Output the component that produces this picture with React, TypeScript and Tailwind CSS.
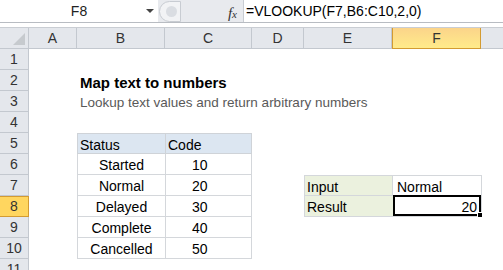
import React from 'react';

const cols = [
  { key: 'A', w: 48 },
  { key: 'B', w: 88 },
  { key: 'C', w: 87 },
  { key: 'D', w: 52 },
  { key: 'E', w: 88 },
  { key: 'F', w: 89 },
  { key: '', w: 40 },
];

const statusRows = [
  ['Started', '10'],
  ['Normal', '20'],
  ['Delayed', '30'],
  ['Complete', '40'],
  ['Cancelled', '50'],
];

const font = { fontFamily: '"Liberation Sans", Arial, sans-serif' };

function FormulaBar() {
  return (
    <div className="flex h-[23px] border-b border-[#b8bcc2] bg-white">
      <div className="relative flex w-[158px] items-center justify-center">
        <span className="text-[14px] text-[#222]">F8</span>
        <span className="absolute right-[4px] top-[9px] h-0 w-0 border-x-[4px] border-t-[4px] border-x-transparent border-t-[#444]" />
      </div>
      <div className="relative flex w-[85px] items-center bg-[#e8eaee]">
        <div className="absolute left-[1px] top-[1px] h-[21px] w-[22px] rounded-l-full border border-[#c8ccd2] bg-[#f2f3f5]">
          <div className="ml-[6px] mt-[4px] h-[11px] w-[11px] rounded-full bg-[#dadde2]" />
        </div>
        <span className="absolute right-[6px] top-[2px] text-[15px] italic text-[#333]" style={{ fontFamily: '"Liberation Serif", serif' }}>
          f<span className="text-[11px]">x</span>
        </span>
      </div>
      <div className="flex flex-1 items-center border-l border-[#c8ccd2] pl-[2px] text-[14px] text-black">
        =VLOOKUP(F7,B6:C10,2,0)
      </div>
    </div>
  );
}

function ColHeaders() {
  return (
    <div className="flex h-[21px] bg-[#e4e7ec]">
      <div className="relative w-[29px] shrink-0 border-b border-r border-[#c3c8cf]">
        <span className="absolute bottom-[3px] right-[3px] h-0 w-0 border-b-[12px] border-l-[12px] border-b-[#c6cace] border-l-transparent" />
      </div>
      {cols.map((c, i) =>
        c.key === 'F' ? (
          <div
            key={i}
            style={{ width: c.w }}
            className="flex shrink-0 items-center justify-center border border-t-0 border-[#d39b32] bg-gradient-to-b from-[#fbd48a] to-[#ffeb8a] text-[14px] text-[#333]"
          >
            {c.key}
          </div>
        ) : (
          <div
            key={i}
            style={{ width: c.w }}
            className="flex shrink-0 items-center justify-center border-b border-r border-[#c3c8cf] text-[14px] text-[#333]"
          >
            {c.key}
          </div>
        ),
      )}
    </div>
  );
}

function RowHeader({ n }: { n: number }) {
  const active = n === 8;
  return (
    <div
      className={
        active
          ? 'flex h-[21px] w-[29px] shrink-0 items-center justify-center border border-l-0 border-[#d39b32] bg-[#ffd65f] text-[14px] text-[#333]'
          : 'flex h-[21px] w-[29px] shrink-0 items-center justify-center border-b border-r border-[#c3c8cf] bg-[#e4e7ec] text-[14px] text-[#333]'
      }
    >
      {n}
    </div>
  );
}

function Row({ n, children }: { n: number; children?: React.ReactNode }) {
  return (
    <div className="flex h-[21px]">
      <RowHeader n={n} />
      <div className="flex flex-1 items-stretch">{children}</div>
    </div>
  );
}

export default function App() {
  return (
    <div className="h-[270px] w-[503px] overflow-hidden bg-white" style={font}>
      <FormulaBar />
      <div className="h-[5px] border-b border-[#c9cdd3] bg-white" />
      <ColHeaders />

      <Row n={1} />
      <Row n={2}>
        <div className="pl-[51px] pt-[2px] text-[15px] font-bold text-black">Map text to numbers</div>
      </Row>
      <Row n={3}>
        <div className="pl-[51px] pt-[2px] text-[13.5px] text-[#595959]">
          Lookup text values and return arbitrary numbers
        </div>
      </Row>
      <Row n={4} />
      <Row n={5}>
        <div className="w-[48px]" />
        <div className="flex w-[175px] border border-[#cfd3d8] bg-[#dce6f1] text-[14px] text-black">
          <div className="w-[88px] border-r border-[#cfd3d8] pl-[2px] pt-[1px]">Status</div>
          <div className="flex-1 pl-[2px] pt-[1px]">Code</div>
        </div>
      </Row>
      {statusRows.map(([s, c], i) => {
        const n = 6 + i;
        return (
          <Row key={n} n={n}>
            <div className="w-[48px]" />
            <div className="flex w-[175px] border-x border-b border-[#d4d7db] text-[14px] text-black">
              <div className="w-[88px] border-r border-[#d4d7db] pt-[1px] text-center">{s}</div>
              <div className="flex-1 pl-[26px] pt-[1px]">{c}</div>
            </div>
            {n === 7 && (
              <>
                <div className="w-[52px]" />
                <div className="flex w-[178px] border border-[#d4d7db] text-[14px] text-black">
                  <div className="w-[88px] border-r border-[#d4d7db] bg-[#ebf1de] pl-[2px] pt-[1px]">Input</div>
                  <div className="flex-1 pl-[4px] pt-[1px]">Normal</div>
                </div>
              </>
            )}
            {n === 8 && (
              <>
                <div className="w-[52px]" />
                <div className="flex w-[178px] border-x border-b border-[#d4d7db] text-[14px] text-black">
                  <div className="w-[88px] bg-[#ebf1de] pl-[2px] pt-[1px]">Result</div>
                  <div className="relative -mt-[1px] flex-1 border-[2px] border-black bg-white pr-[2px] text-right">
                    20
                    <span className="absolute -bottom-[4px] -right-[4px] h-[6px] w-[6px] border border-white bg-black" />
                  </div>
                </div>
              </>
            )}
          </Row>
        );
      })}
      <Row n={11} />
    </div>
  );
}
